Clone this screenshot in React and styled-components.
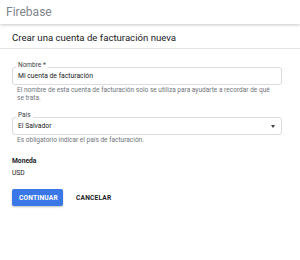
import React from 'react';
import styled, { createGlobalStyle } from 'styled-components';

const GlobalStyle = createGlobalStyle`
  html, body {
    margin: 0;
    padding: 0;
    background: #fff;
  }
  body {
    font-family: Roboto, "Liberation Sans", Arial, sans-serif;
    color: #202124;
  }
`;

const Page = styled.div`
  width: 300px;
  height: 260px;
  overflow: hidden;
  background: #fff;
`;

const TopBar = styled.header`
  height: 24px;
  display: flex;
  align-items: center;
  padding-left: 6px;
  font-size: 12px;
  color: #80868b;
  box-shadow: 0 1px 3px rgba(0, 0, 0, 0.22);
  position: relative;
  z-index: 1;
`;

const TitleBar = styled.div`
  height: 25px;
  box-sizing: border-box;
  display: flex;
  align-items: center;
  padding: 3px 12px 0;
  font-size: 9.6px;
  color: #202124;
  border-bottom: 1px solid #e3e3e3;
`;

const Form = styled.div`
  padding: 18px 18px 0 12px;
  display: flex;
  flex-direction: column;
`;

const Field = styled.div`
  position: relative;
  height: 18px;
  box-sizing: border-box;
  border: 1px solid #dadce0;
  border-radius: 3px;
  display: flex;
  align-items: center;
  justify-content: space-between;
  padding: 0 6px 0 5px;
  font-size: 6.8px;
  color: #202124;
  margin-top: ${(p) => p.$top || 0}px;
`;

const FloatLabel = styled.span`
  position: absolute;
  top: -7px;
  left: 3px;
  padding: 0 2px;
  background: #fff;
  font-size: 6.5px;
  line-height: 8px;
  color: #3c4043;
`;

const Caret = styled.span`
  width: 0;
  height: 0;
  border-left: 2.5px solid transparent;
  border-right: 2.5px solid transparent;
  border-top: 3px solid #3c4043;
`;

const Helper = styled.div`
  padding: 1px 4px 0 5px;
  font-size: 6.55px;
  line-height: 8px;
  color: #70757a;
`;

const SectionLabel = styled.div`
  margin-top: 12px;
  font-size: 6.7px;
  font-weight: 700;
  line-height: 10px;
  color: #202124;
`;

const Value = styled.div`
  margin-top: 2px;
  font-size: 6.7px;
  line-height: 10px;
  color: #202124;
`;

const Actions = styled.div`
  margin-top: 11px;
  display: flex;
  align-items: center;
  gap: 13px;
`;

const Button = styled.button`
  height: 17px;
  padding: 0 ${(p) => (p.$primary ? 7 : 0)}px;
  border: none;
  border-radius: 2px;
  font-family: inherit;
  font-size: 6.6px;
  font-weight: 700;
  letter-spacing: 0.2px;
  background: ${(p) => (p.$primary ? '#3b78e7' : 'transparent')};
  color: ${(p) => (p.$primary ? '#fff' : '#202124')};
  box-shadow: ${(p) => (p.$primary ? '0 1px 2px rgba(0,0,0,0.25)' : 'none')};
  width: ${(p) => (p.$primary ? '51px' : 'auto')};
`;

export default function App() {
  return (
    <Page>
      <GlobalStyle />
      <TopBar>Firebase</TopBar>
      <TitleBar>Crear una cuenta de facturación nueva</TitleBar>
      <Form>
        <Field>
          <FloatLabel>Nombre *</FloatLabel>
          Mi cuenta de facturación
        </Field>
        <Helper>
          El nombre de esta cuenta de facturación solo se utiliza para ayudarte a recordar de qué
          <br />
          se trata.
        </Helper>
        <Field $top={15}>
          <FloatLabel>País</FloatLabel>
          El Salvador
          <Caret />
        </Field>
        <Helper>Es obligatorio indicar el país de facturación.</Helper>
        <SectionLabel>Moneda</SectionLabel>
        <Value>USD</Value>
        <Actions>
          <Button $primary>CONTINUAR</Button>
          <Button>CANCELAR</Button>
        </Actions>
      </Form>
    </Page>
  );
}
